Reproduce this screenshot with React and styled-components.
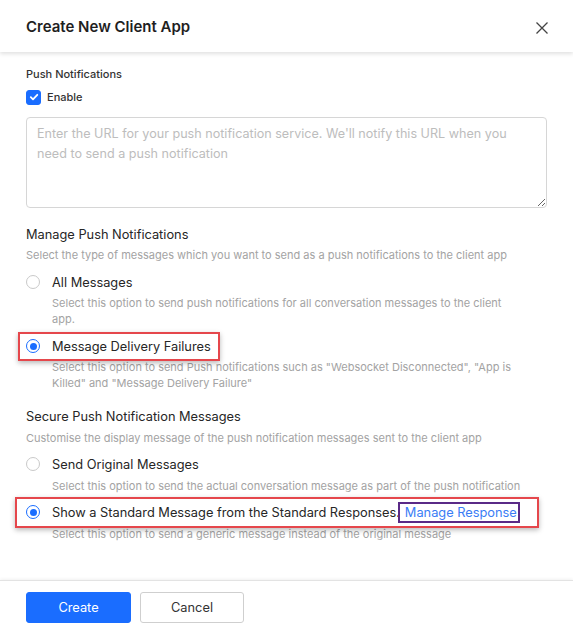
import React, { useState } from 'react';
import styled, { createGlobalStyle } from 'styled-components';

const GlobalStyle = createGlobalStyle`
  html, body {
    margin: 0;
    padding: 0;
    background: #ffffff;
  }
  body {
    font-family: Inter, "Noto Sans", "Liberation Sans", sans-serif;
    color: #262626;
  }
  * { box-sizing: border-box; }
`;

const Modal = styled.div`
  display: flex;
  flex-direction: column;
  min-height: 100vh;
  background: #fff;
`;

const Header = styled.div`
  height: 52px;
  padding: 0 24px 0 26px;
  display: flex;
  align-items: center;
  justify-content: space-between;
  box-shadow: 0 2px 4px rgba(0, 0, 0, 0.12);
  position: relative;
  z-index: 1;
`;

const Title = styled.h2`
  margin: 0;
  font-size: 15px;
  font-weight: 600;
  color: #1f1f1f;
`;

const CloseButton = styled.button`
  border: none;
  background: none;
  padding: 0;
  width: 14px;
  height: 14px;
  display: flex;
  align-items: center;
  justify-content: center;
  cursor: pointer;
  margin-top: 3px;
`;

const Body = styled.div`
  flex: 1;
  padding: 14px 26px 0 26px;
  display: flex;
  flex-direction: column;
`;

const FieldLabel = styled.div`
  font-size: 11px;
  line-height: 16px;
  font-weight: 500;
  color: #333;
`;

const CheckRow = styled.label`
  display: flex;
  align-items: center;
  gap: 6px;
  margin-top: 7px;
  height: 16px;
  font-size: 11px;
  font-weight: 500;
  color: #333;
  cursor: pointer;
`;

const CheckBox = styled.span`
  width: 15px;
  height: 15px;
  border-radius: 3px;
  background: ${(p) => (p.$checked ? '#1a6dff' : '#fff')};
  border: 1px solid ${(p) => (p.$checked ? '#1a6dff' : '#c8c8c8')};
  display: flex;
  align-items: center;
  justify-content: center;
`;

const UrlInput = styled.textarea`
  margin-top: 12px;
  width: 100%;
  height: 91px;
  padding: 6px 10px;
  border: 1px solid #d6d6d6;
  border-radius: 4px;
  font-family: inherit;
  font-size: 12.6px;
  line-height: 20px;
  color: #333;
  resize: vertical;
  outline: none;

  &::placeholder {
    color: #bdbdbd;
  }
`;

const SectionTitle = styled.div`
  margin-top: ${(p) => p.$top}px;
  font-size: 12.8px;
  line-height: 20px;
  color: #262626;
`;

const SectionHint = styled.div`
  margin-top: ${(p) => p.$top}px;
  font-size: 11px;
  line-height: 16px;
  color: #a3a3a3;
`;

const Option = styled.div`
  margin-top: ${(p) => p.$top}px;
  display: flex;
  flex-direction: column;
  align-items: flex-start;
`;

const RadioRow = styled.label`
  position: relative;
  display: inline-flex;
  align-items: center;
  gap: 12px;
  height: 20px;
  font-size: 12.8px;
  color: #262626;
  white-space: nowrap;
  cursor: pointer;

  &::after {
    content: '';
    display: ${(p) => (p.$inset ? 'block' : 'none')};
    position: absolute;
    inset: ${(p) => p.$inset || '0'};
    border: 2px solid #e5474c;
    box-shadow: 0 2px 5px rgba(0, 0, 0, 0.28);
    pointer-events: none;
  }
`;

const Radio = styled.span`
  width: 14px;
  height: 14px;
  flex: none;
  border-radius: 50%;
  border: ${(p) => (p.$checked ? '1.5px solid #1a6dff' : '1px solid #c9c9c9')};
  display: flex;
  align-items: center;
  justify-content: center;
  background: #fff;

  &::before {
    content: '';
    width: 7px;
    height: 7px;
    border-radius: 50%;
    background: ${(p) => (p.$checked ? '#1a6dff' : 'transparent')};
  }
`;

const OptionHint = styled.div`
  margin-top: ${(p) => p.$top}px;
  margin-left: 26px;
  max-width: 473px;
  font-size: 11px;
  line-height: 16px;
  color: #a3a3a3;
`;

const ManageLink = styled.a`
  position: relative;
  display: inline-block;
  margin-left: 5px;
  color: #3a7df5;
  text-decoration: none;
  cursor: pointer;

  &::after {
    content: '';
    position: absolute;
    inset: -3px -3px -3px -7px;
    border: 2px solid #5a2a87;
  }
`;

const Footer = styled.div`
  border-top: 1px solid #e3e3e3;
  box-shadow: 0 -1px 3px rgba(0, 0, 0, 0.06);
  padding: 11px 26px 8px 26px;
  display: flex;
  gap: 9px;
`;

const Button = styled.button`
  height: 31px;
  width: ${(p) => (p.$primary ? 105 : 104)}px;
  border-radius: 3px;
  font-family: inherit;
  font-size: 12.8px;
  cursor: pointer;
  background: ${(p) => (p.$primary ? '#1a6dff' : '#fff')};
  color: ${(p) => (p.$primary ? '#fff' : '#333')};
  border: 1px solid ${(p) => (p.$primary ? '#1a6dff' : '#cfcfcf')};
`;

const CloseIcon = () => (
  <svg width="12" height="12" viewBox="0 0 12 12">
    <path d="M0.5 0.5 L11.5 11.5 M11.5 0.5 L0.5 11.5" stroke="#444" strokeWidth="1.3" />
  </svg>
);

const CheckIcon = () => (
  <svg width="10" height="10" viewBox="0 0 10 10">
    <path d="M1.8 5.2 L4 7.3 L8.3 2.8" fill="none" stroke="#fff" strokeWidth="1.8" strokeLinecap="round" strokeLinejoin="round" />
  </svg>
);

const App = () => {
  const [enabled, setEnabled] = useState(true);
  const [pushType, setPushType] = useState('failures');
  const [secureType, setSecureType] = useState('standard');

  return (
    <Modal>
      <GlobalStyle />
      <Header>
        <Title>Create New Client App</Title>
        <CloseButton aria-label="Close">
          <CloseIcon />
        </CloseButton>
      </Header>

      <Body>
        <FieldLabel>Push Notifications</FieldLabel>
        <CheckRow onClick={() => setEnabled(!enabled)}>
          <CheckBox $checked={enabled}>{enabled && <CheckIcon />}</CheckBox>
          Enable
        </CheckRow>
        <UrlInput placeholder="Enter the URL for your push notification service. We'll notify this URL when you need to send a push notification" />

        <SectionTitle $top={17}>Manage Push Notifications</SectionTitle>
        <SectionHint $top={2}>
          Select the type of messages which you want to send as a push notifications to the client app
        </SectionHint>

        <Option $top={9}>
          <RadioRow onClick={() => setPushType('all')}>
            <Radio $checked={pushType === 'all'} />
            All Messages
          </RadioRow>
          <OptionHint $top={3}>
            Select this option to send push notifications for all conversation messages to the client app.
          </OptionHint>
        </Option>

        <Option $top={9}>
          <RadioRow $inset="-4px -9px -5px -8px" onClick={() => setPushType('failures')}>
            <Radio $checked={pushType === 'failures'} />
            Message Delivery Failures
          </RadioRow>
          <OptionHint $top={3}>
            Select this option to send Push notifications such as "Websocket Disconnected", "App is Killed" and "Message Delivery Failure"
          </OptionHint>
        </Option>

        <SectionTitle $top={16}>Secure Push Notification Messages</SectionTitle>
        <SectionHint $top={3}>
          Customise the display message of the push notification messages sent to the client app
        </SectionHint>

        <Option $top={8}>
          <RadioRow onClick={() => setSecureType('original')}>
            <Radio $checked={secureType === 'original'} />
            Send Original Messages
          </RadioRow>
          <OptionHint $top={4}>
            Select this option to send the actual conversation message as part of the push notification
          </OptionHint>
        </Option>

        <Option $top={8}>
          <RadioRow $inset="-5px -22px -6px -11px" onClick={() => setSecureType('standard')}>
            <Radio $checked={secureType === 'standard'} />
            <span>
              Show a Standard Message from the Standard Responses.
              <ManageLink>Manage Response</ManageLink>
            </span>
          </RadioRow>
          <OptionHint $top={4}>
            Select this option to send a generic message instead of the original message
          </OptionHint>
        </Option>
      </Body>

      <Footer>
        <Button $primary>Create</Button>
        <Button>Cancel</Button>
      </Footer>
    </Modal>
  );
};

export default App;
